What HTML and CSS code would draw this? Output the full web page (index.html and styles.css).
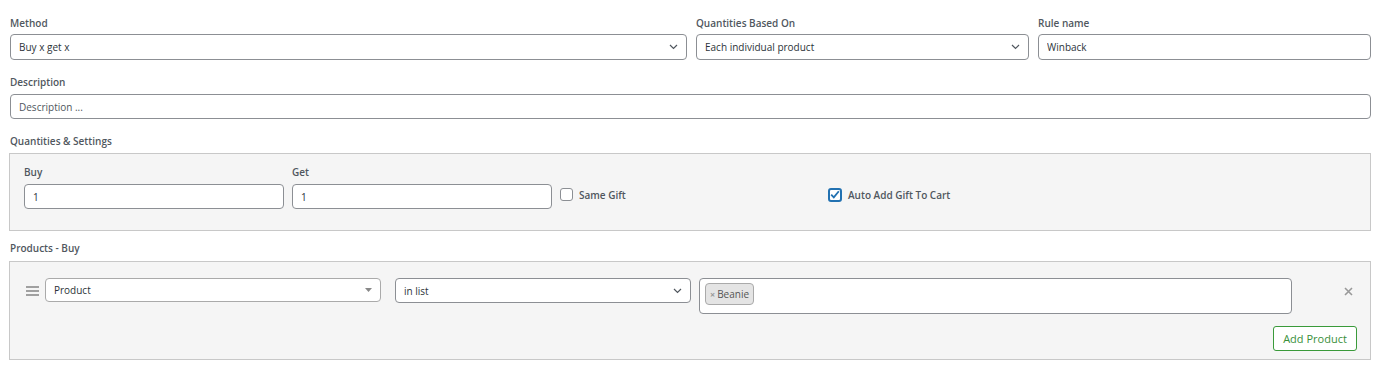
FILE: index.html
```html
<!DOCTYPE html>
<html lang="en">
<head>
    <meta charset="UTF-8">
    <meta name="viewport" content="width=device-width, initial-scale=1.0">
    <title>Rule - Buy x get x</title>
    <link rel="stylesheet" href="styles.css">
</head>
<body>
    <div class="rule-form">
        <div class="row-top">
            <div class="field">
                <label class="field-label">Method</label>
                <div class="select select-tall">
                    <span>Buy x get x</span>
                    <svg class="chevron" width="9" height="6" viewBox="0 0 9 6"><path d="M1 1l3.5 3.5L8 1" fill="none" stroke="#50575e" stroke-width="1.2"/></svg>
                </div>
            </div>
            <div class="field">
                <label class="field-label">Quantities Based On</label>
                <div class="select select-tall">
                    <span>Each individual product</span>
                    <svg class="chevron" width="9" height="6" viewBox="0 0 9 6"><path d="M1 1l3.5 3.5L8 1" fill="none" stroke="#50575e" stroke-width="1.2"/></svg>
                </div>
            </div>
            <div class="field">
                <label class="field-label">Rule name</label>
                <input class="text-input input-tall" type="text" value="Winback">
            </div>
        </div>

        <div class="field">
            <label class="field-label">Description</label>
            <input class="text-input" type="text" placeholder="Description ...">
        </div>

        <!-- Quantities -->
        <div class="field field-panel">
            <label class="field-label">Quantities &amp; Settings</label>
            <div class="panel panel-qty">
                <div class="qty-grid">
                    <div>
                        <label class="field-label">Buy</label>
                        <input class="text-input" type="text" value="1">
                    </div>
                    <div>
                        <label class="field-label">Get</label>
                        <input class="text-input" type="text" value="1">
                    </div>
                    <label class="check">
                        <span class="box"></span>
                        Same Gift
                    </label>
                    <label class="check">
                        <span class="box checked">
                            <svg width="10" height="9" viewBox="0 0 10 9"><path d="M1.2 4.6l2.6 2.7L8.8 1.2" fill="none" stroke="#2271b1" stroke-width="1.8"/></svg>
                        </span>
                        Auto Add Gift To Cart
                    </label>
                </div>
            </div>
        </div>

        <!-- Products -->
        <div class="field">
            <label class="field-label">Products - Buy</label>
            <div class="panel panel-products">
                <div class="product-row">
                    <span class="handle"><i></i><i></i><i></i></span>
                    <div class="select select-product">
                        <span>Product</span>
                        <svg width="7" height="4" viewBox="0 0 7 4"><path d="M0 0h7L3.5 4z" fill="#888"/></svg>
                    </div>
                    <div class="select select-op">
                        <span>in list</span>
                        <svg class="chevron" width="9" height="6" viewBox="0 0 9 6"><path d="M1 1l3.5 3.5L8 1" fill="none" stroke="#50575e" stroke-width="1.2"/></svg>
                    </div>
                    <div class="tags">
                        <span class="tag"><span class="tag-x">×</span>Beanie</span>
                    </div>
                    <span class="remove">
                        <svg width="9" height="9" viewBox="0 0 9 9"><path d="M1 1l7 7M8 1L1 8" stroke="#999" stroke-width="1.6"/></svg>
                    </span>
                </div>
                <div class="actions">
                    <button type="button" class="btn-add">Add Product</button>
                </div>
            </div>
        </div>
    </div>
</body>
</html>
```

FILE: styles.css
```css
body {
    margin: 0;
    padding: 0;
    background-color: #ffffff;
    font-family: "Open Sans", Arial, sans-serif;
    font-size: 10px;
    color: #2c3338;
}

.rule-form {
    padding: 16px 9px 0 10px;
}

.row-top {
    display: grid;
    grid-template-columns: 677px 333px 1fr;
    column-gap: 9px;
}

.field {
    margin-bottom: 15px;
}

.field-panel {
    margin-bottom: 10px;
}

.field-label {
    display: block;
    font-weight: 600;
    color: #50575e;
    line-height: 14px;
    margin-bottom: 5px;
}

.row-top .field-label {
    margin-bottom: 4px;
}

.text-input,
.select {
    box-sizing: border-box;
    width: 100%;
    height: 25px;
    border: 1px solid #8c8f94;
    border-radius: 4px;
    background-color: #ffffff;
    padding: 0 8px;
    font-family: inherit;
    font-size: 10px;
    color: #2c3338;
}

.text-input {
    display: block;
    outline: none;
}

.text-input::placeholder {
    color: #50575e;
}

.input-tall,
.select-tall {
    height: 26px;
}

.select {
    display: flex;
    align-items: center;
    justify-content: space-between;
}

.panel {
    background-color: #f5f5f5;
    border: 1px solid #c8c8c8;
    margin-left: -1px;
}

.panel-qty {
    padding: 11px 14px 21px;
}

.qty-grid {
    display: grid;
    grid-template-columns: 260px 260px 260px 260px;
    column-gap: 8px;
    align-items: end;
}

.check {
    display: flex;
    align-items: center;
    height: 25px;
    padding-bottom: 4px;
    box-sizing: border-box;
    font-weight: 600;
    color: #50575e;
}

.box {
    box-sizing: border-box;
    width: 13px;
    height: 13px;
    border: 1px solid #8c8f94;
    border-radius: 3px;
    background-color: #ffffff;
    margin-right: 6px;
    display: flex;
    align-items: center;
    justify-content: center;
}

.box.checked {
    width: 14px;
    height: 14px;
    border: 2px solid #2271b1;
}

.panel-products {
    margin-top: 6px;
    padding: 16px 13px 8px 16px;
}

.product-row {
    display: flex;
    align-items: flex-start;
}

.handle {
    width: 13px;
    display: flex;
    flex-direction: column;
    gap: 2px;
    margin-top: 8px;
    margin-right: 6px;
}

.handle i {
    display: block;
    height: 2px;
    background-color: #a0a0a0;
}

.select-product {
    width: 336px;
    height: 24px;
    border-color: #aaaaaa;
    padding-right: 8px;
}

.select-op {
    width: 296px;
    margin-left: 14px;
}

.tags {
    box-sizing: border-box;
    width: 593px;
    height: 36px;
    margin-left: 8px;
    border: 1px solid #8c8f94;
    border-radius: 4px;
    background-color: #ffffff;
    padding: 4px 5px;
}

.tag {
    display: inline-flex;
    align-items: center;
    box-sizing: border-box;
    height: 22px;
    padding: 0 4px;
    border: 1px solid #aaaaaa;
    border-radius: 4px;
    background-color: #e4e4e4;
    color: #555555;
}

.tag-x {
    color: #999999;
    font-size: 9px;
    font-weight: 700;
    margin-right: 2px;
}

.remove {
    margin-left: 52px;
    margin-top: 9px;
    display: flex;
}

.actions {
    display: flex;
    justify-content: flex-end;
    margin-top: 12px;
}

.btn-add {
    box-sizing: border-box;
    width: 84px;
    height: 25px;
    border: 1px solid #3a9a3a;
    border-radius: 3px;
    background-color: #ffffff;
    color: #3a8f3a;
    font-family: inherit;
    font-size: 11px;
    cursor: pointer;
}
```
